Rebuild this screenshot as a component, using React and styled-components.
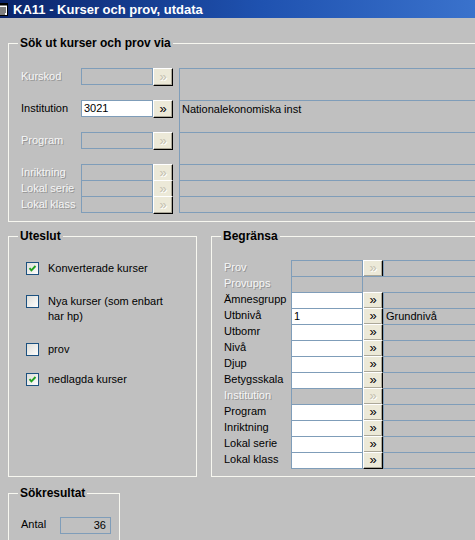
import React from "react";
import styled, { createGlobalStyle } from "styled-components";

const Global = createGlobalStyle`
  html, body { margin: 0; padding: 0; background: #c0c0c0; overflow: hidden; }
  body { font-family: "Liberation Sans", Arial, sans-serif; font-size: 11px; color: #000; }
`;

const Window = styled.div`
  width: 475px;
  height: 540px;
  overflow: hidden;
  background: #c0c0c0;
`;

const TitleBar = styled.div`
  height: 18px;
  display: flex;
  align-items: center;
  gap: 4px;
  background: linear-gradient(90deg, #0a246a 0%, #1f52b0 55%, #3a72cc 100%);
  color: #fff;
  font: bold 13px "Liberation Sans", Arial, sans-serif;
  white-space: nowrap;
`;

const Client = styled.div`
  width: 560px;
  padding: 18px 0 0 8px;
  display: flex;
  flex-direction: column;
`;

const Group = styled.fieldset`
  margin: ${(p) => p.$mt || 0}px 0 0 0;
  padding: 0;
  border: 1px solid #f7f7f0;
  min-width: 0;
  width: ${(p) => (p.$w ? `${p.$w}px` : "auto")};
  flex: ${(p) => (p.$grow ? 1 : "none")};
  box-sizing: border-box;
`;

const Legend = styled.legend`
  margin-left: 9px;
  padding: 0 2px;
  font: bold 12px/14px "Liberation Sans", Arial, sans-serif;
  color: #000;
`;

const Inner = styled.div`
  padding: ${(p) => p.$pad};
`;

const BottomSection = styled.div`
  display: flex;
  gap: 14px;
  width: 540px;
  margin-top: 7px;
  align-items: stretch;
`;

const Row = styled.div`
  display: flex;
  align-items: flex-start;
  height: ${(p) => p.$h}px;
`;

const Label = styled.div`
  width: ${(p) => p.$w}px;
  flex: none;
  line-height: ${(p) => p.$lh}px;
  white-space: nowrap;
  color: ${(p) => (p.$disabled ? "#f6f6f6" : "#000")};
  text-shadow: ${(p) => (p.$disabled ? "1px 1px 0 #949494" : "none")};
`;

const Field = styled.div`
  width: ${(p) => p.$w}px;
  height: 17px;
  flex: none;
  box-sizing: border-box;
  border: 1px solid #7f9db9;
  background: ${(p) => (p.$disabled ? "#c0c0c0" : "#fff")};
  padding: 0 ${(p) => (p.$right ? 4 : 2)}px 0 2px;
  line-height: 15px;
  text-align: ${(p) => (p.$right ? "right" : "left")};
  white-space: nowrap;
`;

const Btn = styled.div`
  width: 20px;
  height: ${(p) => p.$h}px;
  flex: none;
  box-sizing: border-box;
  background: #ece9d8;
  border-top: 1px solid #fff;
  border-left: 1px solid #fff;
  border-right: 1px solid #000;
  border-bottom: 1px solid #000;
  box-shadow: inset -1px -1px 0 #aca899;
  display: flex;
  align-items: center;
  justify-content: center;
  font: 13px/1 "Liberation Sans", Arial, sans-serif;
  padding-bottom: 2px;
  color: ${(p) => (p.$disabled ? "#c4c0ae" : "#000")};
  text-shadow: ${(p) => (p.$disabled ? "1px 1px 0 #fff" : "none")};
`;

const Desc = styled.div`
  flex: 1;
  height: ${(p) => p.$h + 1}px;
  box-sizing: border-box;
  border: 1px solid #7f9db9;
  margin-left: ${(p) => p.$ml || 0}px;
  padding: ${(p) => p.$pt}px 2px 0 2px;
  line-height: 15px;
  white-space: nowrap;
`;

const CheckRow = styled.div`
  display: flex;
  align-items: flex-start;
  gap: 9px;
  margin-top: ${(p) => p.$mt}px;
`;

const CheckText = styled.div`
  line-height: 15px;
  margin-top: -1px;
  max-width: 122px;
`;

const Gap = styled.div`
  width: 0;
`;

function TitleIcon() {
  return (
    <svg width="9" height="15" viewBox="0 0 9 15">
      <rect x="-3" y="1.5" width="10.5" height="12" fill="#fff" stroke="#000" />
      <rect x="-3" y="1.5" width="10.5" height="2" fill="#000" />
      <line x1="-1" y1="6" x2="6" y2="6" stroke="#000" />
      <line x1="-1" y1="8" x2="6" y2="8" stroke="#000" />
      <line x1="-1" y1="10" x2="6" y2="10" stroke="#000" />
      <line x1="-1" y1="12" x2="5" y2="12" stroke="#000" />
    </svg>
  );
}

function CheckBox({ checked }) {
  return (
    <svg width="13" height="13" viewBox="0 0 13 13" style={{ flex: "none" }}>
      <defs>
        <linearGradient id="cbg" x1="0" y1="0" x2="1" y2="1">
          <stop offset="0" stopColor="#dcdcd7" />
          <stop offset="1" stopColor="#ffffff" />
        </linearGradient>
      </defs>
      <rect x="0.5" y="0.5" width="12" height="12" fill="url(#cbg)" stroke="#1c5180" />
      {checked && (
        <polyline
          points="3.5,6.2 5.4,8.3 9.5,4"
          fill="none"
          stroke="#21a121"
          strokeWidth="1.9"
        />
      )}
    </svg>
  );
}

const searchRows = [
  { label: "Kurskod", disabled: true, h: 32 },
  { label: "Institution", value: "3021", desc: "Nationalekonomiska inst", h: 32 },
  { label: "Program", disabled: true, h: 32 },
  { label: "Inriktning", disabled: true, h: 16 },
  { label: "Lokal serie", disabled: true, h: 16 },
  { label: "Lokal klass", disabled: true, h: 16 },
];

const limitRows = [
  { label: "Prov", disabled: true },
  { label: "Provupps", disabled: true, noBtn: true },
  { label: "Ämnesgrupp" },
  { label: "Utbnivå", value: "1", desc: "Grundnivå" },
  { label: "Utbomr" },
  { label: "Nivå" },
  { label: "Djup" },
  { label: "Betygsskala", noDesc: true },
  { label: "Institution", disabled: true },
  { label: "Program" },
  { label: "Inriktning" },
  { label: "Lokal serie" },
  { label: "Lokal klass" },
];

const checks = [
  { text: "Konverterade kurser", checked: true, mt: 19 },
  { text: "Nya kurser (som enbart har hp)", checked: false, mt: 19 },
  { text: "prov", checked: false, mt: 19 },
  { text: "nedlagda kurser", checked: true, mt: 16 },
];

export default function App() {
  return (
    <Window>
      <Global />
      <TitleBar>
        <TitleIcon />
        <span>KA11 - Kurser och prov, utdata</span>
      </TitleBar>
      <Client>
        <Group $w={540}>
          <Legend>Sök ut kurser och prov via</Legend>
          <Inner $pad="18px 0 9px 12px">
            {searchRows.map((r) => (
              <Row key={r.label} $h={r.h}>
                <Label $w={60} $lh={17} $disabled={r.disabled}>
                  {r.label}
                </Label>
                <Field $w={72} $disabled={r.disabled}>
                  {r.value}
                </Field>
                <Btn $h={18} $disabled={r.disabled}>»</Btn>
                <Desc $h={r.h} $ml={6} $pt={1}>
                  {r.desc}
                </Desc>
              </Row>
            ))}
          </Inner>
        </Group>

        <BottomSection>
          <Group $w={189}>
            <Legend>Uteslut</Legend>
            <Inner $pad="0 0 10px 17px">
              {checks.map((c) => (
                <CheckRow key={c.text} $mt={c.mt}>
                  <CheckBox checked={c.checked} />
                  <CheckText>{c.text}</CheckText>
                </CheckRow>
              ))}
            </Inner>
          </Group>
          <Group $grow>
            <Legend>Begränsa</Legend>
            <Inner $pad="17px 0 8px 12px">
              {limitRows.map((r) => (
                <Row key={r.label} $h={16}>
                  <Label $w={67} $lh={14} $disabled={r.disabled}>
                    {r.label}
                  </Label>
                  <Field $w={72} $disabled={r.disabled}>
                    {r.value}
                  </Field>
                  {!r.noBtn && <Btn $h={17} $disabled={r.disabled}>»</Btn>}
                  {r.noDesc ? (
                    <Gap />
                  ) : (
                    <Desc $h={16} $ml={r.noBtn ? -1 : 0} $pt={0}>
                      {r.desc}
                    </Desc>
                  )}
                </Row>
              ))}
            </Inner>
          </Group>
        </BottomSection>

        <Group $w={112} $mt={9}>
          <Legend>Sökresultat</Legend>
          <Inner $pad="17px 0 20px 12px">
            <Row $h={17}>
              <Label $w={39} $lh={15}>Antal</Label>
              <Field $w={51} $disabled $right>
                36
              </Field>
            </Row>
          </Inner>
        </Group>
      </Client>
    </Window>
  );
}
